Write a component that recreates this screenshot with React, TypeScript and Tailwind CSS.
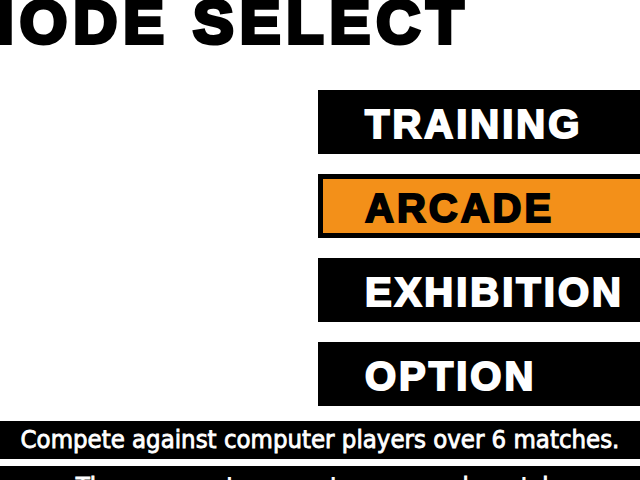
import React from 'react';

type ModeItem = {
  label: string;
  active?: boolean;
};

const modes: ModeItem[] = [
  { label: 'TRAINING' },
  { label: 'ARCADE', active: true },
  { label: 'EXHIBITION' },
  { label: 'OPTION' },
];

const ModeButton: React.FC<{ item: ModeItem }> = ({ item }) => (
  <div
    className={`shrink-0 h-[64px] flex items-center pt-[4px] ${
      item.active
        ? 'bg-[#f39019] border-[5px] border-r-0 border-black pl-[42px]'
        : 'bg-black pl-[47px]'
    }`}
  >
    <span
      className={`text-[40px] leading-none font-bold tracking-[3px] ${
        item.active
          ? 'text-black [-webkit-text-stroke:2px_black]'
          : 'text-white [-webkit-text-stroke:2px_white]'
      }`}
    >
      {item.label}
    </span>
  </div>
);

export default function App() {
  return (
    <div className="w-[640px] h-[480px] bg-white overflow-hidden flex flex-col font-['Liberation_Sans',Arial,sans-serif]">
      {/* Title, cut off at the left edge */}
      <h1 className="shrink-0 -ml-[37px] -mt-[8px] text-[61px] leading-[60px] font-bold tracking-[6px] text-black whitespace-nowrap [-webkit-text-stroke:4px_black]">
        MODE SELECT
      </h1>

      {/* Menu */}
      <div className="shrink-0 ml-[318px] mt-[38px] flex flex-col gap-[20px]">
        {modes.map(m => (
          <ModeButton key={m.label} item={m} />
        ))}
      </div>

      {/* Description */}
      <div className="shrink-0 mt-[15px] h-[38px] bg-black flex items-center justify-center">
        <p className="text-white text-[25.5px] leading-none whitespace-nowrap font-['DejaVu_Sans_Condensed','DejaVu_Sans',sans-serif] [-webkit-text-stroke:0.8px_white]">
          Compete against computer players over 6 matches.
        </p>
      </div>
      <div className="shrink-0 mt-[7px] h-[40px] bg-black flex justify-center pt-[8px]">
        <p className="text-white text-[25.5px] leading-none whitespace-nowrap font-['DejaVu_Sans_Condensed','DejaVu_Sans',sans-serif] [-webkit-text-stroke:0.8px_white]">
          The opponents grow stronger each match.
        </p>
      </div>
    </div>
  );
}
